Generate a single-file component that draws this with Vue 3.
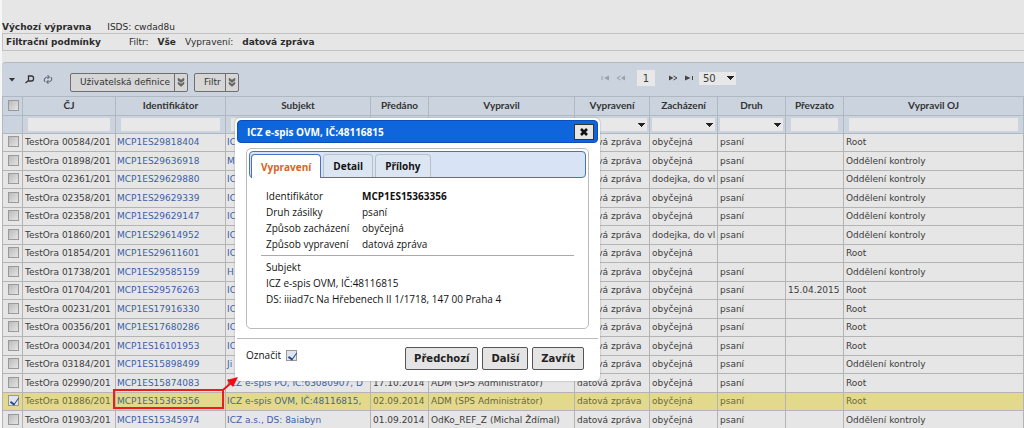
<script setup>
import { ref } from 'vue'

const rows = ref([
  ['TestOra 00584/201', 'MCP1ES29818404', 'IC', '', '', 'datová zpráva', 'obyčejná', 'psaní', '', 'Root'],
  ['TestOra 01898/201', 'MCP1ES29636918', 'M', '', '', 'datová zpráva', 'obyčejná', 'psaní', '', 'Oddělení kontroly'],
  ['TestOra 02361/201', 'MCP1ES29629880', 'IC', '', '', 'datová zpráva', 'dodejka, do vl', 'psaní', '', 'Oddělení kontroly'],
  ['TestOra 02358/201', 'MCP1ES29629339', 'IC', '', '', 'datová zpráva', 'obyčejná', 'psaní', '', 'Oddělení kontroly'],
  ['TestOra 02358/201', 'MCP1ES29629147', 'IC', '', '', 'datová zpráva', 'obyčejná', 'psaní', '', 'Oddělení kontroly'],
  ['TestOra 01860/201', 'MCP1ES29614952', 'IC', '', '', 'datová zpráva', 'dodejka, do vl', 'psaní', '', 'Oddělení kontroly'],
  ['TestOra 01854/201', 'MCP1ES29611601', 'IC', '', '', 'datová zpráva', 'obyčejná', '', '', 'Root'],
  ['TestOra 01738/201', 'MCP1ES29585159', 'H', '', '', 'datová zpráva', 'obyčejná', 'psaní', '', 'Oddělení kontroly'],
  ['TestOra 01704/201', 'MCP1ES29576263', 'IC', '', '', 'datová zpráva', 'obyčejná', 'psaní', '15.04.2015', 'Root'],
  ['TestOra 00231/201', 'MCP1ES17916330', 'IC', '', '', 'datová zpráva', 'obyčejná', 'psaní', '', 'Root'],
  ['TestOra 00356/201', 'MCP1ES17680286', 'IC', '', '', 'datová zpráva', 'obyčejná', 'psaní', '', 'Root'],
  ['TestOra 00034/201', 'MCP1ES16101953', 'IC', '', '', 'datová zpráva', 'obyčejná', 'psaní', '', 'Root'],
  ['TestOra 03184/201', 'MCP1ES15898499', 'Ji', '', '', 'datová zpráva', 'obyčejná', 'psaní', '', 'Oddělení kontroly'],
  ['TestOra 02990/201', 'MCP1ES15874083', 'ICZ e-spis PO, IČ:63080907, D', '17.10.2014', 'ADM (SPS Administrátor)', 'datová zpráva', 'obyčejná', 'psaní', '', 'Root'],
  ['TestOra 01886/201', 'MCP1ES15363356', 'ICZ e-spis OVM, IČ:48116815,', '02.09.2014', 'ADM (SPS Administrátor)', 'datová zpráva', 'obyčejná', 'psaní', '', 'Root'],
  ['TestOra 01903/201', 'MCP1ES15345974', 'ICZ a.s., DS: 8aiabyn', '01.09.2014', 'OdKo_REF_Z (Michal Ždímal)', 'datová zpráva', 'obyčejná', 'psaní', '', 'Oddělení kontroly'],
].map((cells, i) => ({ cells, checked: i === 14 })))

const columns = [
  ['ČJ', 'cj', 'text'],
  ['Identifikátor', 'ident', 'text'],
  ['Subjekt', 'subj', 'text'],
  ['Předáno', 'date', 'text'],
  ['Vypravil', 'person', 'text'],
  ['Vypravení', 'method', 'select'],
  ['Zacházení', 'kind', 'select'],
  ['Druh', 'kind', 'select'],
  ['Převzato', 'date', 'text'],
  ['Vypravil OJ', 'unit', 'text'],
]

const details = [
  ['Identifikátor', 'MCP1ES15363356'],
  ['Druh zásilky', 'psaní'],
  ['Způsob zacházení', 'obyčejná'],
  ['Způsob vypravení', 'datová zpráva'],
]
const marked = ref(true)
</script>

<template>
  <main class="page">
    <header class="top">
      <div class="office"><b>Výchozí výpravna</b><span>ISDS: cwdad8u</span></div>
      <div class="conditions">
        <b>Filtrační podmínky</b>
        <span class="cond">Filtr:</span><b>Vše</b>
        <span>Vypravení:</span><b>datová zpráva</b>
      </div>
    </header>

    <section class="grid">
      <div class="toolbar">
        <button class="icon" aria-label="Nabídka"><svg width="12" height="12" viewBox="0 0 12 12"><path d="M3 4h6L6 7.500z" fill="#333" /></svg></button>
        <button class="icon" aria-label="Hledat"><svg width="12" height="12" viewBox="0 0 12 12"><path d="M4.500 2h3a2 2 0 0 1 2 2v1a2 2 0 0 1-2 2h-3zM4.500 6.500l-3 2.500" fill="none" stroke="#333" stroke-width="1.300" /></svg></button>
        <button class="icon" aria-label="Obnovit"><svg width="12" height="12" viewBox="0 0 12 12"><path d="M3 8a3 3 0 0 1 0-4q1-1 4-1M9 3a3 3 0 0 1 0 4q-1 1-4 1M5.500 1l2 2-2 2M6.500 6l-2 2 2 2" fill="none" stroke="#4a4f58" stroke-width="0.900" /></svg></button>
        <button class="split wide">Uživatelská definice<i><svg width="8" height="10" viewBox="0 0 8 10"><path d="M1 1L4 3l3-2v2.500L4 5.500 1 3.500zM1 5L4 7l3-2v2L4 9.500 1 7z" fill="#666" stroke="#666" stroke-width="0.500" /></svg></i></button>
        <button class="split">Filtr<i><svg width="8" height="10" viewBox="0 0 8 10"><path d="M1 1L4 3l3-2v2.500L4 5.500 1 3.500zM1 5L4 7l3-2v2L4 9.500 1 7z" fill="#666" stroke="#666" stroke-width="0.500" /></svg></i></button>
        <nav class="pager" aria-label="Stránkování">
          <button class="icon pale" aria-label="První"><svg width="10" height="10" viewBox="0 0 10 10"><path d="M2 3v4" stroke="currentColor" /><path d="M9 2.500v5L4 5z" fill="currentColor" /></svg></button>
          <button class="icon pale" aria-label="Předchozí strana"><svg width="10" height="10" viewBox="0 0 10 10"><path d="M4.500 3L1 5l3.500 2" fill="none" stroke="currentColor" /><path d="M9 2.500v5L5 5z" fill="currentColor" /></svg></button>
          <input class="pageno" value="1" aria-label="Strana">
          <button class="icon" aria-label="Další strana"><svg width="10" height="10" viewBox="0 0 10 10"><path d="M5.500 3L9 5 5.500 7" fill="none" stroke="currentColor" /><path d="M1 2.500v5L5.500 5z" fill="currentColor" /></svg></button>
          <button class="icon" aria-label="Poslední"><svg width="10" height="10" viewBox="0 0 10 10"><path d="M8.500 3v4" stroke="currentColor" /><path d="M1 2.500v5L6.500 5z" fill="currentColor" /></svg></button>
          <select class="drop size" aria-label="Počet řádků"><option>50</option></select>
        </nav>
      </div>

      <table>
        <colgroup>
          <col class="c-check">
          <col v-for="c in columns" :key="c[0]" :class="'c-' + c[1]">
        </colgroup>
        <thead>
          <tr class="titles">
            <th><input type="checkbox" aria-label="Vybrat vše"></th>
            <th v-for="c in columns" :key="c[0]">{{ c[0] }}</th>
          </tr>
          <tr class="filters">
            <td></td>
            <td v-for="c in columns" :key="c[0]" :class="c[2]">
              <input v-if="c[2] === 'text'" type="text" :aria-label="c[0]">
              <select v-else class="drop" :aria-label="c[0]"><option></option></select>
            </td>
          </tr>
        </thead>
        <tbody>
          <tr v-for="(r, i) in rows" :key="i" :class="{ picked: r.checked }">
            <td class="check"><input v-model="r.checked" type="checkbox" :aria-label="r.cells[0]"></td>
            <td v-for="(t, j) in r.cells" :key="j" :class="{ linked: j === 1 || j === 2 }">
              <a v-if="j === 1 || j === 2" href="#">{{ t }}</a><template v-else>{{ t }}</template>
            </td>
          </tr>
        </tbody>
      </table>
    </section>

    <section class="dialog" role="dialog" aria-labelledby="dlg-title">
      <header class="title">
        <h1 id="dlg-title">ICZ e-spis OVM, IČ:48116815</h1>
        <button class="close" aria-label="Zavřít okno"><svg width="10" height="10" viewBox="0 0 10 10"><path d="M2 2l6 6M8 2L2 8" stroke="#111" stroke-width="2.600" /></svg></button>
      </header>
      <div class="panel">
        <div class="tabs" role="tablist">
          <button class="tab active" role="tab" aria-selected="true">Vypravení</button>
          <button class="tab" role="tab">Detail</button>
          <button class="tab" role="tab">Přílohy</button>
        </div>
        <div class="content">
          <dl>
            <template v-for="d in details" :key="d[0]"><dt>{{ d[0] }}</dt><dd>{{ d[1] }}</dd></template>
          </dl>
          <div class="subject">
            <p>Subjekt</p>
            <p>ICZ e-spis OVM, IČ:48116815</p>
            <p>DS: iiiad7c Na Hřebenech II 1/1718, 147 00 Praha 4</p>
          </div>
        </div>
      </div>
      <footer>
        <label>Označit <input v-model="marked" type="checkbox"></label>
        <div class="actions">
          <button>Předchozí</button><button>Další</button><button>Zavřít</button>
        </div>
      </footer>
    </section>
    <div class="callout"></div>
    <svg class="arrow" width="18" height="16" viewBox="0 0 18 16" aria-hidden="true"><path d="M1 14L9 7" stroke="#e8131a" stroke-width="2" /><path d="M16 1L5 4l6 7z" fill="#f00a14" /></svg>
  </main>
</template>

<style>
body { margin: 0; background: #e6e6e6; overflow: hidden; }
</style>

<style scoped>
* { box-sizing: border-box; }
.page { position: relative; padding-left: 2px; height: 100vh; overflow: hidden; background: linear-gradient(90deg, #f6f6f6 2px, #e6e6e6 2px); font: 9px/14px Verdana, "DejaVu Sans", sans-serif; color: #3c3c3c; }
button, input, select { font: inherit; color: inherit; margin: 0; padding: 0; }
.top { padding-top: 20px; color: #2c2c2c; }
.office { display: flex; gap: 16px; height: 13px; }
.conditions { display: flex; align-items: center; gap: 9px; height: 18px; padding-left: 3px; border: 1px solid #c2c2c2; border-right: 0; }
.cond { margin-left: 19px; }
.grid { margin-top: 11px; border-top: 1px solid #b4b8be; border-radius: 4px 0 0 0; background: #cbd3df; }
.toolbar { display: flex; align-items: center; height: 33px; padding-left: 4px; position: relative; }
.icon { display: grid; place-items: center; width: 12px; height: 12px; border: 0; background: none; margin-right: 6px; color: #444; }
.split { display: flex; align-items: center; height: 19px; margin: 5px 6px 0 0; padding-left: 9px; border: 1px solid #6f6f6f; border-radius: 2px; background: #d6d6d6; color: #333; }
.split.wide { margin-left: 10px; }
.split i { display: grid; place-items: center; width: 13px; height: 17px; margin-left: 4px; border-left: 1px solid #6f6f6f; }
.pager { position: absolute; left: 597px; top: 7px; display: flex; align-items: center; font-size: 10px; }
.pager .icon { margin-right: 4px; }
.pale { color: #9aa0a9 !important; }
.pageno { width: 18px; height: 16px; margin: 0 12px 0 6px; border: 0; background: #e8e8e8; text-align: center; }
.drop { appearance: none; border: 0; border-radius: 0; height: 13px; padding: 0 4px; background-color: #e8e8e8; background-image: conic-gradient(from -45deg at 50% 100%, #222 90deg, #0000 0); background-size: 7px 4px; background-repeat: no-repeat; background-position: right 2px center; }
.size { width: 37px; }
table { width: 100%; border-collapse: collapse; table-layout: fixed; }
.c-check { width: 20px; } .c-cj { width: 93px; } .c-ident { width: 110px; } .c-subj { width: 145px; }
.c-date { width: 58px; } .c-person { width: 146px; } .c-method { width: 75px; } .c-kind { width: 68px; }
th, td { overflow: hidden; white-space: nowrap; border: 1px solid #b4b4b4; padding: 0 0 1px 2px; line-height: 14px; }
td.linked { padding-left: 1px; }
th { padding: 0 0 2px; font: bold 10px/14px Lato, sans-serif; color: #333; }
thead th, thead td { border-color: #b0b8c2; }
.titles { height: 19px; }
.filters { height: 18px; }
.filters td { padding: 0 5px; }
.filters .select { padding: 0 2px; }
.filters input { display: block; width: 100%; height: 13px; border: 0; background: #e8e8e8; }
.filters select { display: block; width: 100%; }
tbody tr { height: 18px; background: #e6e6e6; }
tbody tr:nth-child(even) { height: 19px; }
tbody tr.picked { background: #e3d98c; color: #6d6740; }
a { color: #3c5fa6; text-decoration: none; }
.picked a { color: #466a7c; }
input[type="checkbox"] { appearance: none; display: block; width: 11px; height: 11px; margin: 0 0 0 5px; border: 1px solid #999; background: linear-gradient(135deg, #bbb, #e4e4e4); }
input[type="checkbox"]:checked { background: #dfe5f0; }
input[type="checkbox"]:checked::after { content: ""; display: block; width: 4px; height: 7px; margin-left: 3px; border: solid #2b4a8c; border-width: 0 1px 2px 0; transform: rotate(35deg); }
td.check { padding: 0 0 2px; }
.callout { position: absolute; left: 113px; top: 389px; width: 111px; height: 20px; border: 2px solid #ec1d1d; }
.dialog { position: absolute; left: 235px; top: 118px; width: 365px; padding: 2px; background: #fff; border-radius: 5px; color: #111; font: 10px/16px "Open Sans", sans-serif; box-shadow: 0 0 2px #999; }
.title { display: flex; align-items: center; justify-content: space-between; height: 23px; padding: 0 3px 0 9px; border: 1px solid #0d4fb8; border-radius: 4px; background: #0f66dc; color: #fff; }
h1 { margin: 0; font-size: 10px; line-height: 16px; }
.close { display: grid; place-items: center; width: 20px; height: 16px; border: 1px solid #333; background: #e6e6e6; }
.panel { margin: 5px 9px 0; padding: 2px; height: 181px; border: 1px solid #bbb; border-radius: 5px; }
.tabs { display: flex; align-items: flex-end; gap: 2px; height: 27px; padding-left: 1px; border: 1px solid #4a70c0; border-radius: 4px; background: #d8e4f5; }
.tab { height: 23px; padding: 0 9px; border: 1px solid #b5c2cc; border-bottom: 0; border-radius: 4px 4px 0 0; background: #dce6f3; font-weight: bold; color: #111; }
.tab.active { height: 24px; margin-bottom: -1px; border-color: #4a70c0; background: #fff; color: #d9641c; }
.content { padding: 10px 12px; }
dl { display: grid; grid-template-columns: 96px 1fr; margin: 0; padding: 0 4px 3px 5px; border-bottom: 1px solid #aaa; }
dd { margin: 0; }
dd:first-of-type { font-weight: bold; }
.subject { padding: 3px 5px; }
p { margin: 0; }
footer { display: flex; justify-content: space-between; margin-top: 9px; padding: 8px 14px 9px 9px; border-top: 1px solid #bbb; }
label { display: flex; align-items: center; height: 16px; }
.actions { display: flex; gap: 4px; }
.actions button { height: 23px; padding: 0 8px; border: 1px solid #555; border-radius: 2px; background: #e4e4e4; color: #222; font: bold 10px/16px Verdana, "DejaVu Sans", sans-serif; }
.arrow { position: absolute; left: 222px; top: 376px; }
</style>
